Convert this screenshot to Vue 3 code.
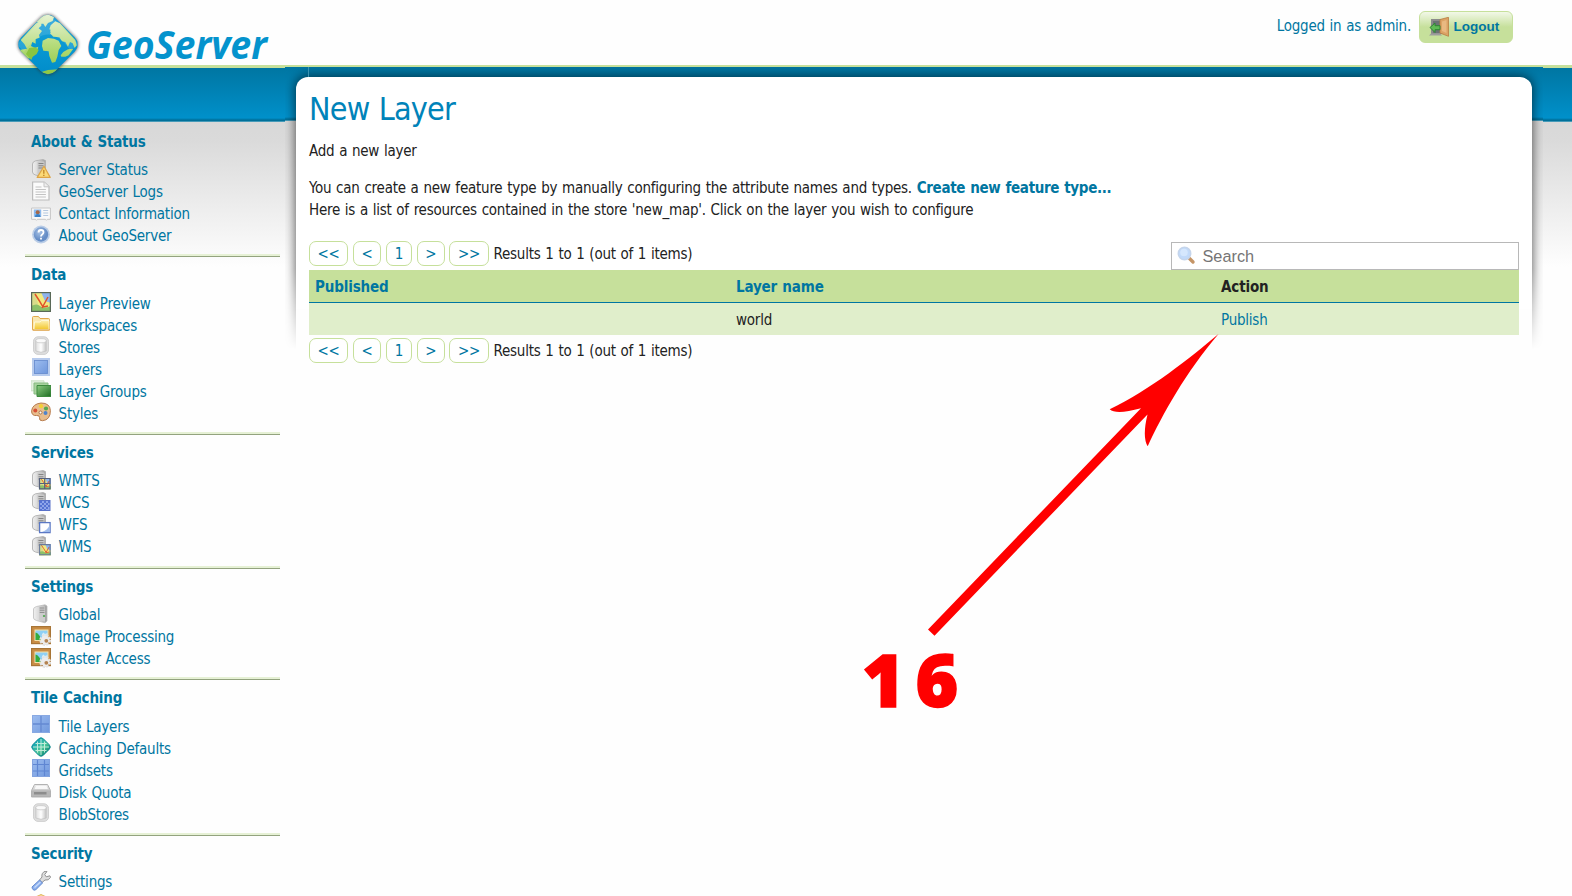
<script setup>
const sections = [
  {
    title: 'About & Status',
    items: [
      ['server-status', 'Server Status'],
      ['page', 'GeoServer Logs'],
      ['vcard', 'Contact Information'],
      ['help', 'About GeoServer'],
    ],
  },
  {
    title: 'Data',
    items: [
      ['map', 'Layer Preview'],
      ['folder', 'Workspaces'],
      ['database', 'Stores'],
      ['layer', 'Layers'],
      ['layers', 'Layer Groups'],
      ['palette', 'Styles'],
    ],
  },
  {
    title: 'Services',
    items: [
      ['wmts', 'WMTS'],
      ['wcs', 'WCS'],
      ['wfs', 'WFS'],
      ['wms', 'WMS'],
    ],
  },
  {
    title: 'Settings',
    items: [
      ['server', 'Global'],
      ['picture', 'Image Processing'],
      ['picture', 'Raster Access'],
    ],
  },
  {
    title: 'Tile Caching',
    items: [
      ['tiles', 'Tile Layers'],
      ['gwc', 'Caching Defaults'],
      ['grid', 'Gridsets'],
      ['drive', 'Disk Quota'],
      ['database', 'BlobStores'],
    ],
  },
  {
    title: 'Security',
    items: [
      ['wrench', 'Settings'],
      ['shield', ''],
    ],
  },
]
const pages = [
  ['first', '<<'],
  ['prev', '<'],
  ['num', '1'],
  ['next', '>'],
  ['last', '>>'],
]
</script>

<template>
  <div class="page">
    <svg class="defs" width="0" height="0" aria-hidden="true">
      <defs>
        <linearGradient id="gSrv" x1="0" x2="1"><stop offset="0" stop-color="#f0f0f0" /><stop offset=".5" stop-color="#d4d4d4" /><stop offset="1" stop-color="#999" /></linearGradient>
        <linearGradient id="gBlue" x1="0" y1="0" x2="1" y2="1"><stop offset="0" stop-color="#9dbdf0" /><stop offset="1" stop-color="#6f97dc" /></linearGradient>
        <linearGradient id="gFold" x1="0" y1="0" x2="0" y2="1"><stop offset="0" stop-color="#fdf0b0" /><stop offset="1" stop-color="#f3c62c" /></linearGradient>
        <linearGradient id="gDb" x1="0" x2="1"><stop offset="0" stop-color="#dedede" /><stop offset=".5" stop-color="#fff" /><stop offset="1" stop-color="#c4c4c4" /></linearGradient>
        <linearGradient id="gGreen" x1="0" y1="0" x2="1" y2="1"><stop offset="0" stop-color="#8ccc80" /><stop offset="1" stop-color="#1d6c22" /></linearGradient>
        <radialGradient id="gHelp" cx=".4" cy=".35"><stop offset="0" stop-color="#a6c1e5" /><stop offset="1" stop-color="#658dc6" /></radialGradient>
        <linearGradient id="gGwc" x1="0" x2="1"><stop offset="0" stop-color="#12a5b4" /><stop offset=".6" stop-color="#4fc99b" /><stop offset="1" stop-color="#138f78" /></linearGradient>
        <linearGradient id="gDrive" x1="0" y1="0" x2="0" y2="1"><stop offset="0" stop-color="#f0f0f0" /><stop offset="1" stop-color="#9c9c9c" /></linearGradient>
      </defs>

      <symbol id="i-server" viewBox="0 0 20 20">
        <path d="M5.500 2.500 14 .8 16 2v15l-2 1.800-8.500-2.300Q2.500 15.500 2.500 14V5Q2.500 3.500 5.500 2.500Z" fill="url(#gSrv)" stroke="#bdbdbd" stroke-width=".8" />
        <path d="M8 2.500h6v15.200L8 16Z" fill="#cdcdcd" />
        <path d="M8.700 4h4.800M8.700 6.200h4.800M8.700 8.400h4.800" stroke="#8a8a8a" stroke-width="1" />
        <circle cx="13" cy="12" r="1.100" fill="#48a748" />
      </symbol>
      <symbol id="i-box" viewBox="0 0 20 20">
        <path d="M4.500 1.800 12 .6l2.500 1v15.400L12 18l-7.500-2Q1.500 15.200 1.500 13V5Q1.500 2.800 4.500 1.800Z" fill="url(#gSrv)" stroke="#b0b0b0" stroke-width=".9" />
        <path d="M6.500 2.500h7V17l-7-1.300Z" fill="#cacaca" />
        <path d="M7.500 4.500h5M7.500 6.800h5M7.500 9h5" stroke="#858585" />
      </symbol>
      <symbol id="i-server-status" viewBox="0 0 20 20">
        <use href="#i-box" />
        <path d="M13 7.200 19.200 18.400H6.200Z" fill="#fbd977" stroke="#dda548" stroke-width="1.200" stroke-linejoin="round" />
        <path d="M12.800 10.800v4M12.800 15.800v1.200" stroke="#c48a2c" stroke-width="1.400" />
      </symbol>
      <symbol id="i-page" viewBox="0 0 20 20">
        <path d="M1.600 1h11.600L18 5.500V19H1.600Z" fill="#fbfbfb" stroke="#bcbcbc" stroke-width="1.200" />
        <path d="M13 1v4.800h5" fill="#eee" stroke="#c5c5c5" />
        <path d="M4.500 6h6M4.500 8.500h10.400M4.500 11h10.400M4.500 13.500h10.400M4.500 16h10.400" stroke="#c3c3c3" />
      </symbol>
      <symbol id="i-vcard" viewBox="0 0 20 20">
        <path d="M.6 5h18.800v11.300h-3l-1 1-1-1h-8l-1 1-1-1H.6Z" fill="#f9f9f9" stroke="#c6c6c6" />
        <rect x="2.800" y="6.500" width="7.400" height="7.500" fill="#8bbaee" />
        <circle cx="6.700" cy="9.300" r="2" fill="#a4694a" />
        <path d="M4 14q0-3 2.700-3t2.800 3Z" fill="#3a80c4" />
        <path d="M12.200 7.500h5M12.200 10h5M12.200 12.500h5" stroke="#b3c7df" stroke-width="1.100" />
      </symbol>
      <symbol id="i-help" viewBox="0 0 20 20">
        <circle cx="10" cy="9.500" r="8.900" fill="#b9cce6" />
        <circle cx="10" cy="9.500" r="7.200" fill="url(#gHelp)" />
        <path d="M7.500 7.500Q7.500 5 10 5t2.500 2.200Q12.500 8.500 11.200 9.400 10 10.200 10 11.400M10 12.700v1.800" fill="none" stroke="#fff" stroke-width="1.800" />
      </symbol>
      <symbol id="i-mapart" viewBox="0 0 20 20">
        <rect width="20" height="20" fill="#f2ea7f" />
        <path d="M0 0h4L9 20H0Z" fill="#d9dc8a" />
        <path d="M10 0h10v11l-6-2Z" fill="#8fb4ec" />
        <path d="M0 14q6-3 9 0t11 0v6H0Z" fill="#8cc069" />
        <path d="M4 2q4 6 8 13l5-1M17 5 11 16" fill="none" stroke="#e0512a" stroke-width="1.500" />
      </symbol>
      <symbol id="i-map" viewBox="0 0 20 20">
        <use href="#i-mapart" />
        <rect x=".6" y=".6" width="18.800" height="18.800" fill="none" stroke="#596857" stroke-width="1.200" />
      </symbol>
      <symbol id="i-folder" viewBox="0 0 20 20">
        <path d="M1.500 15.500V3.500q0-1 1-1h5l1.500 2h8.500q1 0 1 1v10.500H2Z" fill="#fae8b0" stroke="#e2a94c" />
        <path d="M3.500 8h5.500l1.500-1.500h7.500V15.500H3Z" fill="url(#gFold)" stroke="#fffbe2" stroke-width=".8" />
        <path d="M1.500 16h17" stroke="#d9983b" />
      </symbol>
      <symbol id="i-database" viewBox="0 0 20 20">
        <rect x="2.500" y=".8" width="15" height="17.600" rx="4.500" fill="#dedede" stroke="#d0d0d0" />
        <path d="M4.800 4.500v10.500q5.200 2.600 10.400 0V4.500Z" fill="url(#gDb)" stroke="#c0c0c0" stroke-width=".7" />
        <ellipse cx="10" cy="4.700" rx="5.200" ry="2.100" fill="#fafafa" stroke="#c4c4c4" stroke-width=".7" />
      </symbol>
      <symbol id="i-layer" viewBox="0 0 20 20">
        <rect x="1" y="0" width="18" height="18" fill="#b7cbed" />
        <rect x="3.500" y="2.500" width="13" height="13" fill="url(#gBlue)" stroke="#6b8fd0" stroke-width=".9" />
      </symbol>
      <symbol id="i-layers" viewBox="0 0 20 20">
        <path d="M0 .8h13v10H0Z" fill="#e3f1df" stroke="#cce2c7" />
        <path d="M3 3h14v11H3Z" fill="#a8d39e" stroke="#86ba80" />
        <path d="M6 5.500h14v11H6Z" fill="url(#gGreen)" stroke="#3d8b3e" />
      </symbol>
      <symbol id="i-palette" viewBox="0 0 20 20">
        <path d="M10 1Q19 1 19.400 8.500 19.500 18 11.500 18.700 8 19 8.500 15.500 8.500 13 5.500 13.500.5 14 .6 8.800 1.500 2 10 1Z" fill="#e8bd8d" stroke="#b77b4c" />
        <circle cx="4.300" cy="8.500" r="2" fill="#d75035" />
        <circle cx="10" cy="4.200" r="2.100" fill="#f4cf35" />
        <circle cx="15" cy="6.500" r="2.100" fill="#57a84f" />
        <circle cx="14.500" cy="11" r="2" fill="#4f83cb" />
        <circle cx="9.500" cy="10.500" r="1.500" fill="#fff" stroke="#a9764c" />
      </symbol>
      <symbol id="i-wmts" viewBox="0 0 20 20">
        <use href="#i-box" />
        <svg x="8" y="8" width="12" height="11.500" viewBox="0 0 20 20" preserveAspectRatio="none"><use href="#i-mapart" /></svg>
        <path d="M8.500 8.500h10.500v10.300H8.500ZM13.700 8.500v10M8.500 13.500h10.500" fill="none" stroke="#55607c" stroke-width="1.200" />
      </symbol>
      <symbol id="i-wcs" viewBox="0 0 20 20">
        <use href="#i-box" />
        <rect x="8.500" y="8.500" width="10.500" height="10" fill="#8fa6ea" stroke="#5a72c8" />
        <path d="M9 9h2v2H9zM13 9h2v2h-2zM17 9h2v2h-2zM11 11h2v2h-2zM15 11h2v2h-2zM9 13h2v2H9zM13 13h2v2h-2zM17 13h2v2h-2zM11 15h2v2h-2zM15 15h2v2h-2zM9 17h2v1.500H9zM13 17h2v1.500h-2z" fill="#5673d2" />
      </symbol>
      <symbol id="i-wfs" viewBox="0 0 20 20">
        <use href="#i-box" />
        <rect x="8.600" y="8.600" width="10.500" height="10" fill="#fff" stroke="#5b78c4" stroke-width="1.300" />
        <path d="M11 18q6-2 7.600-7v7Z" fill="#9fbcec" />
      </symbol>
      <symbol id="i-wms" viewBox="0 0 20 20">
        <use href="#i-box" />
        <svg x="8" y="8" width="12" height="11.500" viewBox="0 0 20 20" preserveAspectRatio="none"><use href="#i-mapart" /></svg>
        <path d="M8.600 8.600h10.500v10.200H8.600Z" fill="none" stroke="#6a7b9c" stroke-width="1.100" />
      </symbol>
      <symbol id="i-picture" viewBox="0 0 20 20">
        <rect x=".6" y=".6" width="19" height="17" fill="#c98d45" stroke="#a87536" stroke-width="1.200" />
        <rect x="4" y="4" width="13" height="10.500" fill="#8fd0f5" stroke="#f5e3ab" />
        <path d="M4.500 14V6.500q4 1 6 7.500Z" fill="#35ab3c" />
        <path d="m11 8 1.500-1.500L14 8l2.500-1v6H11Z" fill="#d9edf6" />
        <circle cx="14.200" cy="14" r="4.600" fill="none" stroke="#e3e3e3" stroke-width="2.600" stroke-dasharray="2.400 1.200" />
        <circle cx="14.200" cy="14" r="4.200" fill="#ececec" />
        <circle cx="15.300" cy="14.800" r="1.900" fill="#b58350" />
      </symbol>
      <symbol id="i-tiles" viewBox="0 0 20 20">
        <rect x="1" width="18" height="18" fill="url(#gBlue)" />
        <path d="M10 1v16M2 9h16" stroke="#6489d2" stroke-width="1.300" />
        <path d="M1.500.5h17v17h-17Z" fill="none" stroke="#89a9e2" />
      </symbol>
      <symbol id="i-grid" viewBox="0 0 20 20">
        <rect x="1" width="18" height="18" fill="url(#gBlue)" />
        <path d="M6.500 0v18M13.500 0v18M1 5.500h18M1 12h18" stroke="#5f86d2" stroke-width="1.200" />
        <path d="M1.500.5h17v17h-17Z" fill="none" stroke="#83a3df" />
      </symbol>
      <symbol id="i-gwc" viewBox="0 0 20 20">
        <rect x="2.500" y="2.500" width="15" height="15" rx="3.500" transform="rotate(45 10 10)" fill="url(#gGwc)" stroke="#168c96" stroke-width=".8" />
        <path d="M6.500 4.500v11M10 2v16M13.500 4.500v11M4.500 6.500h11M2 10h16M4.500 13.500h11" stroke="#e3f9e9" stroke-width="1" opacity=".8" />
      </symbol>
      <symbol id="i-drive" viewBox="0 0 20 20">
        <path d="M3.500 3.500h13l3 6v6.500H.5V9.500Z" fill="url(#gDrive)" stroke="#b2b2b2" />
        <path d="M1 9.500h18v6H1Z" fill="#b7b7b7" />
        <path d="M3 11h12.500v2.500H3Z" fill="#8d8d8d" />
        <path d="M5 5h10.500l1.500 3H3.500Z" fill="#fff" opacity=".8" />
      </symbol>
      <symbol id="i-wrench" viewBox="0 0 20 20">
        <path d="M8.500 9 11 6q-.8-4 3-5.700l2 .2-2.300 3 1.500 2.300 3.700-1 .7 1.500Q17.500 10 14 9l-3 2.500Z" fill="#dedede" stroke="#929292" />
        <path d="m1 16 7.500-7 3 3-7 7q-3 .8-3.500-3Z" fill="#8db1ee" stroke="#6288d0" />
        <path d="m3.500 16.500 6-5.500" stroke="#c8dcfb" stroke-width="1.200" />
      </symbol>
      <symbol id="i-shield" viewBox="0 0 20 20">
        <path d="M2 4q4 0 8-2.500Q14 4 18 4v8H2Z" fill="#f8df99" stroke="#dfb45a" />
      </symbol>
      <symbol id="i-door" viewBox="0 0 20 20">
        <path d="M2 2h12v15H2Z" fill="#8b8b8b" />
        <path d="M4 4h9v12H4Z" fill="#6b7274" />
        <path d="M0 18.500h13l-2-2H2Z" fill="#9d9d9d" />
        <path d="M11 2.500 19.500.3v19L11 16Z" fill="#dba365" stroke="#b97c43" stroke-width=".8" />
        <path d="M13 4.500 17.500 3v13L13 14Z" fill="#e9b981" />
        <path d="M1 10.500 6 6v2.700h5v4H6v2.800Z" fill="#5fba55" stroke="#2f8434" />
      </symbol>
      <symbol id="i-search" viewBox="0 0 20 20">
        <path d="m12.500 12.500 3.500 3.500" stroke="#c59566" stroke-width="3.400" stroke-linecap="round" />
        <circle cx="7.500" cy="7.500" r="6.200" fill="#c1dafa" stroke="#c5d5ec" stroke-width="1.500" />
        <circle cx="7" cy="6.500" r="3.800" fill="#d5e7fd" />
      </symbol>
    </svg>

    <div class="band"></div>

    <header class="header">
      <svg class="logo" width="280" height="80" viewBox="0 0 280 80">
        <defs>
          <clipPath id="gem"><rect x="24" y="20.500" width="48" height="48" rx="10" transform="rotate(45 48 44.500)" /></clipPath>
          <linearGradient id="sea" x1="0" y1="0" x2="0" y2="1"><stop offset="0" stop-color="#2aa3dc" /><stop offset=".45" stop-color="#0a9ad4" /><stop offset="1" stop-color="#008bc9" /></linearGradient>
          <linearGradient id="land" gradientUnits="userSpaceOnUse" x1="0" y1="40" x2="0" y2="225"><stop offset="0" stop-color="#e4f1cf" /><stop offset=".5" stop-color="#b6dc7c" /><stop offset="1" stop-color="#8ec63f" /></linearGradient>
          <filter id="soft" x="-20%" y="-20%" width="140%" height="140%"><feGaussianBlur stdDeviation="1.600" /></filter>
        </defs>
        <rect x="24" y="20.500" width="48" height="48" rx="10" transform="rotate(45 48 44.500)" fill="#333" stroke="#333" stroke-width="1.200" opacity=".65" filter="url(#soft)" />
        <g clip-path="url(#gem)">
          <rect x="14" y="10" width="68" height="68" fill="url(#sea)" />
          <g transform="scale(.33333)" fill="url(#land)">
            <path d="M62 120 108 70l16-3 0 10-8 8 10 8-9 12 2 8-12 4 0 14-10-5-4 12 12 6 10-4-4 14-12 10-4 10-14 2-24-26 24-4-8-14Z" />
            <path d="m88 144 18-2 10 8-6 12-12 8-4 10-16-18Z" fill="#8bc540" />
            <path d="M108 66q18-22 34-23l20 8-4 12-14 6-8 12-6-10-10 0Z" />
            <path d="m152 76 14-12 14 6 46 50 4 16-6 8-6-14-8-4-6 14-8-14-10-2-8-12-18-2-10-10 8-8-10-4Z" />
            <path d="m128 122 16-8 18 2 14 6 8 16-8 12-4 20-6 16-10 2-8-20-2-14-16-2-4-14Z" />
            <path d="m182 166 8-10 14-8 16-2-14 20-10 4-12 0Z" />
            <path d="m124 216 20-6 32-2-18 12-14 4Z" />
            <path d="m150 92 8-6 4 10-8 6Z" />
          </g>
          <path d="M48 13.500 79 44.500 70 50Q48 18 24 52L17 44.500Z" fill="#fff" opacity=".13" />
        </g>
        <text x="86" y="59" textLength="181" lengthAdjust="spacingAndGlyphs" class="wordmark">GeoServer</text>
      </svg>
      <div class="user">
        <span class="who">Logged in as admin.</span>
        <button class="logout"><svg class="door" width="20" height="20"><use href="#i-door" /></svg>Logout</button>
      </div>
    </header>

    <div class="body">
      <nav class="sidebar">
        <section v-for="s in sections" :key="s.title" class="group">
          <h3 class="group-title">{{ s.title }}</h3>
          <ul class="links">
            <li v-for="(it, i) in s.items" :key="i" class="link">
              <svg class="icon" width="20" height="20"><use :href="'#i-' + it[0]" /></svg>
              <a>{{ it[1] }}</a>
            </li>
          </ul>
        </section>
      </nav>

      <main class="panel">
        <div class="glow"><div class="glow-shape"></div></div>
        <div class="seam"></div>
        <div class="content">
          <h1 class="title">New Layer</h1>
          <p class="sub">Add a new layer</p>
          <p class="line l1">You can create a new feature type by manually configuring the attribute names and types. <a class="create">Create new feature type...</a></p>
          <p class="line l2">Here is a list of resources contained in the store 'new_map'. Click on the layer you wish to configure</p>

          <div class="tools">
            <div class="pager">
              <a v-for="p in pages" :key="p[0]" class="pg" :class="p[0]">{{ p[1] }}</a>
              <span class="results">Results 1 to 1 (out of 1 items)</span>
            </div>
            <div class="search"><svg width="20" height="20"><use href="#i-search" /></svg><span>Search</span></div>
          </div>
          <div class="row head">
            <span class="key">Published</span><span class="key">Layer name</span><span>Action</span>
          </div>
          <div class="row item">
            <span></span><span>world</span><a>Publish</a>
          </div>
          <div class="pager bottom">
            <a v-for="p in pages" :key="p[0]" class="pg" :class="p[0]">{{ p[1] }}</a>
            <span class="results">Results 1 to 1 (out of 1 items)</span>
          </div>
        </div>
      </main>
    </div>

    <svg class="callout" width="380" height="400" viewBox="840 330 380 400">
      <path d="M1218.500 334 C1190 358 1150 390 1109.700 409.300 Q1116 415 1141 408.300 L928 629.500 L934.500 635.800 L1147.500 414.500 Q1142 437 1147.700 446.300 C1162 415 1186 372 1218.500 334Z" fill="#f00" />
      <text class="step" x="862" y="706.500">1</text>
      <text class="step" x="915.500" y="706.500">6</text>
    </svg>
  </div>
</template>

<style>
html, body { margin: 0; background: #fff; overflow: hidden; }
</style>

<style scoped>
.page {
  position: relative;
  width: 1572px;
  height: 896px;
  overflow: hidden;
  font-family: "DejaVu Sans Condensed", "DejaVu Sans", sans-serif;
  font-stretch: condensed;
  font-size: 15px;
  letter-spacing: -0.23px;
  word-spacing: 0.7px;
  color: #222;
  background: #fefefe;
}
.defs { position: absolute; }
.band, .band::before {
  position: absolute;
  left: 0;
  right: 0;
  top: 65px;
  height: 202px;
  background: linear-gradient(#c6e09b 3px, #0076a2 3px, #0090ca 53px, #007fb2 54px, #007099 55px, #007099 56px, #469ab8 56px, #469ab8 57px, #d8d8d8 57px, #dadada 75px, #fefefe 202px);
}
.band::before {
  content: "";
  left: 285px;
  right: 29px;
  top: 0;
  background: linear-gradient(#c6e09b 2px, #0076a2 2px, #0090ca 52px, #007fb2 53px, #007099 54px, #007099 55px, #469ab8 55px, #469ab8 56px, #d8d8d8 56px, #dadada 74px, #fefefe 202px);
}
.header {
  position: relative;
  z-index: 2;
  height: 77px;
  display: flex;
  justify-content: space-between;
  align-items: flex-start;
}
.wordmark { font: italic 700 40px "Open Sans", "Noto Sans", sans-serif; letter-spacing: 0; fill: #0493cd; }
.user { display: flex; align-items: center; gap: 8px; padding: 11px 59px 0 0; color: #0076a1; }
.who { margin-top: -2px; }
.logout {
  box-sizing: border-box;
  width: 94px;
  height: 32px;
  padding: 0 0 0 9px;
  display: flex;
  align-items: center;
  gap: 4.500px;
  border: 1px solid #c6e09b;
  border-radius: 6px;
  background: linear-gradient(#f2f8e8, #c6e09b 50%);
  color: #0076a1;
  font: 700 13.500px/28px "Liberation Sans", Arial, sans-serif;
  letter-spacing: 0;
}
.door { flex: none; }
.body { position: relative; display: flex; align-items: flex-start; }
.sidebar { box-sizing: border-box; width: 296px; padding: 46.600px 16px 0 25px; color: #0076a1; }
.group { padding: 7px 0 9.070px 6px; border-bottom: 1px solid #93a37f; box-shadow: inset 0 -2px #e6f1d5; }
.group-title { margin: 0 0 6.580px; font-size: 15px; line-height: 22px; font-weight: 700; letter-spacing: -.2px; }
.links { list-style: none; margin: 0; padding: 0; }
.link { display: flex; gap: 7.600px; height: 22px; line-height: 22px; white-space: nowrap; }
.icon { flex: none; margin-top: -.6px; }
.panel { position: relative; width: 1236px; }
.glow {
  position: absolute;
  left: -11px;
  right: -11px;
  top: -10px;
  height: 288px;
  overflow: hidden;
  -webkit-mask-image: linear-gradient(#000 70%, transparent 98%);
  mask-image: linear-gradient(#000 70%, transparent 98%);
}
.glow-shape {
  position: absolute;
  left: 11px;
  right: 11px;
  top: 10px;
  height: 400px;
  border-radius: 12px;
  background: #fff;
  box-shadow: 0 0 11px 1px rgba(0, 0, 0, .6);
}
.seam { position: absolute; left: 12px; top: -10px; width: 1px; height: 10px; background: #3c93b2; }
.content { position: relative; padding: 12px 13px 0 13px; }
.title { margin: 0; font-size: 32px; line-height: 40px; font-weight: 400; color: #0083b9; letter-spacing: -.75px; }
.sub { margin: 11px 0 0; line-height: 22px; }
.line { margin: 0; line-height: 22px; white-space: nowrap; }
.l1 { margin-top: 15px; }
.create { font-weight: 700; color: #0076a1; letter-spacing: -.33px; }
.tools { display: flex; justify-content: space-between; height: 38px; margin-top: 11px; align-items: flex-end; }
.pager { display: flex; align-items: center; height: 25px; margin-bottom: 4px; }
.pg {
  box-sizing: border-box;
  height: 25px;
  margin-right: 5px;
  border: 1px solid #c6e09b;
  border-radius: 7px;
  line-height: 25px;
  text-align: center;
  color: #0076a1;
  background: #fff;
}
.first { width: 39px; }
.prev { width: 28px; }
.num { width: 26px; margin-right: 4.500px; }
.next { width: 28.500px; margin-right: 4px; }
.last { width: 40px; margin-right: 4.500px; }
.search {
  box-sizing: border-box;
  width: 348px;
  height: 28px;
  padding-left: 5px;
  display: flex;
  align-items: center;
  gap: 5.500px;
  border: 1px solid #b8b8b8;
  background: #fff;
  color: #757575;
  font: 16.300px "Liberation Sans", Arial, sans-serif;
  letter-spacing: 0;
}
.row { display: grid; grid-template-columns: 421px 485px 1fr; padding-left: 6px; height: 32px; line-height: 34.500px; }
.head { border-bottom: 1px solid #0076a1; background: #c6e09b; font-weight: 700; letter-spacing: -.15px; }
.key, .item a { color: #0076a1; }
.item { background: #e0eecb; }
.bottom { margin-top: 3px; }
.callout { position: absolute; left: 840px; top: 330px; z-index: 3; }
.step { font: 800 73px "Open Sans", sans-serif; fill: #f00; stroke: #f00; stroke-width: 1.500px; letter-spacing: 0; }
</style>
